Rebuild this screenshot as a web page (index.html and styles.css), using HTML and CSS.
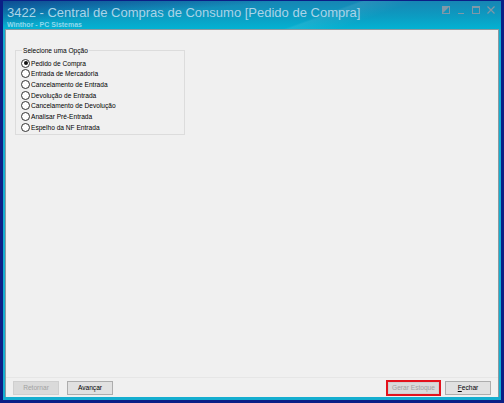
FILE: index.html
```html
<!DOCTYPE html>
<html lang="pt-BR">
<head>
  <meta charset="UTF-8">
  <title>3422 - Central de Compras de Consumo</title>
  <link rel="stylesheet" href="styles.css">
</head>
<body>
  <div class="frame">
    <div class="titlebar">
      <div class="titles">
        <div class="title">3422 - Central de Compras de Consumo [Pedido de Compra]</div>
        <div class="subtitle">Winthor - PC Sistemas</div>
      </div>
      <div class="controls">
        <svg width="8" height="8" viewBox="0 0 8 8"><rect x="0.5" y="0.5" width="7" height="7" fill="none" stroke="#7f98a8"/><path d="M1 1h6L1 7z" fill="#7f98a8"/></svg>
        <svg width="8" height="8" viewBox="0 0 8 8"><path d="M1 7.5h6" stroke="#7f98a8"/></svg>
        <svg width="8" height="8" viewBox="0 0 8 8"><rect x="0.5" y="0.5" width="7" height="7" fill="none" stroke="#7f98a8"/><path d="M0 1.5h8" stroke="#7f98a8"/></svg>
        <svg width="8" height="8" viewBox="0 0 8 8"><path d="M0.5 0.5l7 7M7.5 0.5l-7 7" stroke="#7f98a8" stroke-width="1.2"/></svg>
      </div>
    </div>

    <div class="content">
      <div class="main">
        <fieldset class="group">
          <legend>Selecione uma Opção</legend>
          <label class="option"><span class="radio checked"></span>Pedido de Compra</label>
          <label class="option"><span class="radio"></span>Entrada de Mercadoria</label>
          <label class="option"><span class="radio"></span>Cancelamento de Entrada</label>
          <label class="option"><span class="radio"></span>Devolução de Entrada</label>
          <label class="option"><span class="radio"></span>Cancelamento de Devolução</label>
          <label class="option"><span class="radio"></span>Analisar Pré-Entrada</label>
          <label class="option"><span class="radio"></span>Espelho da NF Entrada</label>
        </fieldset>
      </div>

      <div class="footer">
        <div class="left">
          <button class="btn" disabled>Retornar</button>
          <button class="btn">Avançar</button>
        </div>
        <div class="right">
          <span class="highlight"><button class="btn" disabled>Gerar Estoque</button></span>
          <button class="btn"><u>F</u>echar</button>
        </div>
      </div>
    </div>
  </div>
</body>
</html>
```

FILE: styles.css
```css
html, body {
    margin: 0;
    padding: 0;
}
body {
    width: 504px;
    height: 403px;
    background: #0b1f86;
    padding: 1px 3px 3px;
    box-sizing: border-box;
    font-family: "Liberation Sans", Arial, sans-serif;
}
.frame {
    height: 100%;
    display: flex;
    flex-direction: column;
    padding: 0 2px 3px;
    box-sizing: border-box;
    background: #15aed0;
}
.titlebar {
    height: 28px;
    margin: 0 -2px;
    padding: 0 6px 0 4px;
    display: flex;
    justify-content: space-between;
    background:
        linear-gradient(160deg, transparent 62%, rgba(255, 255, 255, 0.08) 63%, transparent 72%),
        linear-gradient(175deg, rgba(8, 30, 120, 0.55) 0%, transparent 35%),
        linear-gradient(#1785b4, #0c9cc2 55%, #04b2d2);
}
.title {
    font-size: 13px;
    line-height: 13px;
    padding-top: 5px;
    color: #aad4e8;
}
.subtitle {
    font-size: 7px;
    font-weight: bold;
    line-height: 8px;
    padding-top: 2px;
    color: #8fd8ee;
}
.controls {
    display: flex;
    gap: 7px;
    padding-top: 5px;
}
.content {
    flex: 1;
    display: flex;
    flex-direction: column;
    background: #f0f0f0;
    border: 1px solid #8c99a0;
    border-bottom: none;
}
.main {
    flex: 1;
    padding: 17px 9px;
}
.group {
    width: 170px;
    height: 88px;
    box-sizing: border-box;
    margin: 0;
    padding: 4px 0 0 5px;
    border: 1px solid #dcdcdc;
    font-size: 6.6px;
    color: #000;
}
.group legend {
    padding: 0 1px;
    margin-left: 1px;
    font-size: 6.6px;
}
.option {
    display: flex;
    align-items: center;
    height: 10.67px;
    gap: 1px;
    white-space: nowrap;
}
.radio {
    width: 7px;
    height: 7px;
    border: 1px solid #333;
    border-radius: 50%;
    background: #fff;
    position: relative;
}
.radio.checked::after {
    content: "";
    position: absolute;
    left: 1.5px;
    top: 1.5px;
    width: 4px;
    height: 4px;
    border-radius: 50%;
    background: #111;
}
.footer {
    height: 19px;
    display: flex;
    justify-content: space-between;
    align-items: center;
    padding: 0 7px;
    border-top: 1px solid #e6e6e6;
}
.left, .right {
    display: flex;
    align-items: center;
    gap: 8px;
}
.right {
    gap: 4px;
}
.btn {
    width: 46px;
    height: 14px;
    padding: 0;
    font-family: "Liberation Sans", Arial, sans-serif;
    font-size: 6.6px;
    color: #000;
    background: #e1e1e1;
    border: 1px solid #adadad;
}
.btn:disabled {
    color: #a2a2a2;
    background: #dadada;
    border-color: #cfcfcf;
}
.btn u {
    text-decoration: underline;
}
.highlight {
    display: flex;
    border: 2px solid #e3121c;
    padding: 0;
}
.highlight .btn {
    width: 51px;
    height: 12px;
}
```
